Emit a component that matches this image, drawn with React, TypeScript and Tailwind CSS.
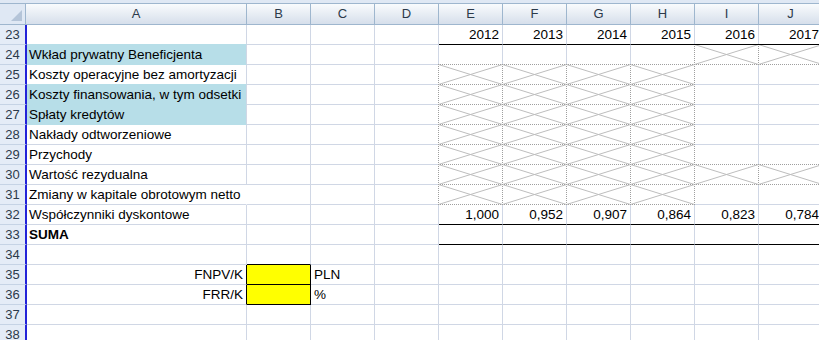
import clsx from "clsx"

type Cell = {
  text?: string
  hatch?: boolean
  hatchTop?: boolean
  blackBottom?: boolean
  blackRight?: boolean
  yellow?: boolean
  right?: boolean
  num?: boolean
}

type Row = {
  n: number
  a?: string
  fill?: boolean
  bold?: boolean
  aRight?: boolean
  aBlackRight?: boolean
  spill?: boolean
  cells?: Partial<Record<string, Cell>>
}

const COLS = ["B", "C", "D", "E", "F", "G", "H", "I", "J"]
const YEARS = ["2012", "2013", "2014", "2015", "2016", "2017"]
const DISCOUNT = ["1,000", "0,952", "0,907", "0,864", "0,823", "0,784"]
const EJ = ["E", "F", "G", "H", "I", "J"]
const EH = ["E", "F", "G", "H"]

const spread = (cols: string[], cell: (i: number) => Cell) =>
  Object.fromEntries(cols.map((c, i) => [c, cell(i)]))

const ROWS: Row[] = [
  { n: 23, cells: spread(EJ, (i) => ({ text: YEARS[i], num: true, blackBottom: true })) },
  { n: 24, a: "Wkład prywatny Beneficjenta", fill: true, cells: spread(["I", "J"], () => ({ hatch: true, hatchTop: true })) },
  { n: 25, a: "Koszty operacyjne bez amortyzacji", cells: spread(EH, () => ({ hatch: true })) },
  { n: 26, a: "Koszty finansowania, w tym odsetki", fill: true, cells: spread(EH, () => ({ hatch: true })) },
  { n: 27, a: "Spłaty kredytów", fill: true, cells: spread(EH, () => ({ hatch: true })) },
  { n: 28, a: "Nakłady odtworzeniowe", cells: spread(EH, () => ({ hatch: true })) },
  { n: 29, a: "Przychody", cells: spread(EH, () => ({ hatch: true })) },
  { n: 30, a: "Wartość rezydualna", cells: spread(EJ, () => ({ hatch: true })) },
  { n: 31, a: "Zmiany w kapitale obrotowym netto", spill: true, cells: spread(EH, () => ({ hatch: true })) },
  { n: 32, a: "Współczynniki dyskontowe", cells: spread(EJ, (i) => ({ text: DISCOUNT[i], num: true, blackBottom: true })) },
  { n: 33, a: "SUMA", bold: true, cells: spread(EJ, () => ({ blackBottom: true })) },
  { n: 34, cells: { B: { blackBottom: true } } },
  { n: 35, a: "FNPV/K", aRight: true, aBlackRight: true, cells: { B: { yellow: true }, C: { text: "PLN" } } },
  { n: 36, a: "FRR/K", aRight: true, aBlackRight: true, cells: { B: { yellow: true }, C: { text: "%" } } },
  { n: 37 },
  { n: 38 },
]

function Hatch({ blackTop }: { blackTop?: boolean }) {
  return (
    <svg className="absolute -left-px -top-px" width={65} height={21} viewBox="0 0 65 21">
      <rect x={0} y={0} width={65} height={21} fill="#fff" />
      <path d="M0.5 0.5L64.5 20.5M0.5 20.5L64.5 0.5" stroke="#bdbdbd" strokeWidth={1} />
      <path
        d="M0 20.5H65M0.5 0V21M64.5 0V21"
        stroke="#9f9f9f"
        strokeDasharray="1 1"
        shapeRendering="crispEdges"
      />
      {blackTop ? (
        <path d="M0 0.5H65" stroke="#000" shapeRendering="crispEdges" />
      ) : (
        <path d="M0 0.5H65" stroke="#9f9f9f" strokeDasharray="1 1" shapeRendering="crispEdges" />
      )}
    </svg>
  )
}

function DataCell({ cell }: { cell?: Cell }) {
  const c = cell ?? {}
  return (
    <div
      className={clsx(
        "relative flex h-[20px] w-[64px] shrink-0 items-end border-r border-b px-[3px] pb-px leading-[16px]",
        c.yellow ? "bg-[#ffff00] border-black" : "border-[#d0d7e5]",
        c.blackBottom && "border-b-black",
        c.num && "justify-end"
      )}
    >
      {c.hatch && <Hatch blackTop={c.hatchTop} />}
      {c.text && <span className="whitespace-nowrap">{c.text}</span>}
    </div>
  )
}

export default function App() {
  return (
    <div className="h-[340px] w-[819px] overflow-hidden bg-white font-['Liberation_Sans',Arial,sans-serif] text-[13.5px] text-black">
      <div className="h-[3px] bg-[#dfe8f4]" />
      {/* column headers */}
      <div className="flex h-[22px] border-y border-[#9eb6ce] text-[13px] text-[#2c3a4a]">
        <div className="flex w-[26px] shrink-0 items-end justify-end border-r border-[#9eb6ce] bg-[#dfe8f4] p-[3px]">
          <div className="h-0 w-0 border-b-[11px] border-l-[11px] border-b-[#b4c4d8] border-l-transparent" />
        </div>
        <div className="flex w-[221px] shrink-0 items-center justify-center border-r border-[#9eb6ce] bg-gradient-to-b from-[#f9fbfd] to-[#d6dfeb]">
          A
        </div>
        {COLS.map((c) => (
          <div
            key={c}
            className="flex w-[64px] shrink-0 items-center justify-center border-r border-[#9eb6ce] bg-gradient-to-b from-[#f9fbfd] to-[#d6dfeb]"
          >
            {c}
          </div>
        ))}
      </div>

      {ROWS.map((r, idx) => {
        const nextFill = ROWS[idx + 1]?.fill
        return (
          <div key={r.n} className="flex h-[20px]">
            <div className="flex w-[27px] shrink-0 items-end justify-center border-r-2 border-b border-r-[#2323d8] border-b-[#c5d3e5] bg-[#e4ecf7] pb-[2px] text-[13px] leading-[15px] text-[#2c3a4a]">
              {r.n}
            </div>
            <div
              className={clsx(
                "flex h-[20px] w-[220px] shrink-0 items-end border-r border-b pb-px pl-[2px] pr-[3px] leading-[16px]",
                r.fill ? "bg-[#b7dee8] border-b-[#b7dee8]" : nextFill ? "border-b-[#b7dee8]" : "border-b-[#d0d7e5]",
                r.aBlackRight ? "border-r-black" : r.spill ? "border-r-white" : "border-r-[#d0d7e5]",
                r.aRight && "justify-end",
                r.bold && "font-bold"
              )}
            >
              {r.a && <span className="whitespace-nowrap">{r.a}</span>}
            </div>
            {COLS.map((c) => (
              <DataCell key={c} cell={r.cells?.[c]} />
            ))}
          </div>
        )
      })}
    </div>
  )
}
